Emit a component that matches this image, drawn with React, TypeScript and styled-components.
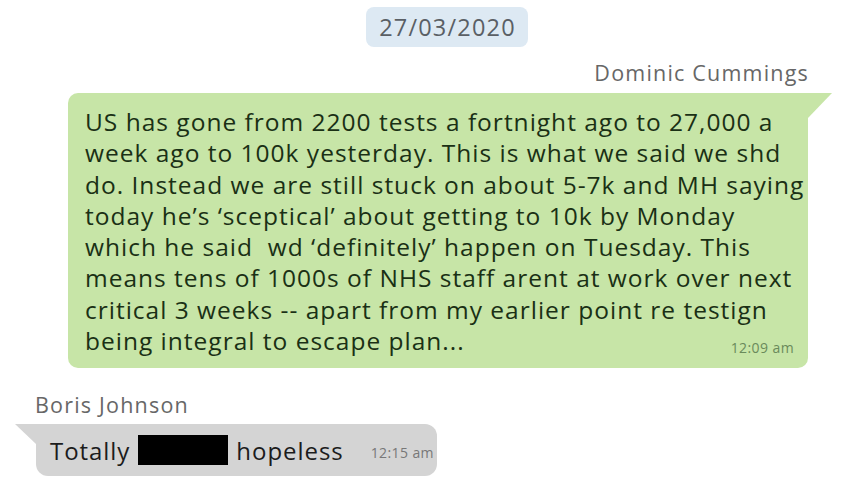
import React from "react";
import styled, { createGlobalStyle } from "styled-components";

const GlobalStyle = createGlobalStyle`
  html, body {
    margin: 0;
    padding: 0;
    background: #ffffff;
  }
  body {
    font-family: "Open Sans", "Noto Sans", sans-serif;
  }
`;

const outgoingLines = [
  "US has gone from 2200 tests a fortnight ago to 27,000 a",
  "week ago to 100k yesterday. This is what we said we shd",
  "do. Instead we are still stuck on about 5-7k and MH saying",
  "today he\u2019s \u2018sceptical\u2019 about getting to 10k by Monday",
  "which he said  wd \u2018definitely\u2019 happen on Tuesday. This",
  "means tens of 1000s of NHS staff arent at work over next",
  "critical 3 weeks -- apart from my earlier point re testign",
];

const App: React.FC = () => (
  <>
    <GlobalStyle />
    <Thread>
      <DateRow>
        <DatePill>27/03/2020</DatePill>
      </DateRow>

      <SenderName $align="right">Dominic Cummings</SenderName>
      <OutgoingBubble>
        {outgoingLines.map((line) => (
          <Line key={line}>{line}</Line>
        ))}
        <LastRow>
          <Line>being integral to escape plan...</Line>
          <Stamp $tone="green">12:09 am</Stamp>
        </LastRow>
      </OutgoingBubble>

      <SenderName $align="left">Boris Johnson</SenderName>
      <IncomingBubble>
        <InlineText>Totally</InlineText>
        <Redacted />
        <InlineText>hopeless</InlineText>
        <Stamp $tone="grey">12:15 am</Stamp>
      </IncomingBubble>
    </Thread>
  </>
);

const Thread = styled.div`
  display: flex;
  flex-direction: column;
  width: 850px;
  height: 478px;
  overflow: hidden;
  padding-top: 7px;
  box-sizing: border-box;
`;

const DateRow = styled.div`
  display: flex;
  justify-content: center;
  padding-left: 44px;
`;

const DatePill = styled.div`
  background: #dde9f3;
  color: #5a5f65;
  font-size: 23.5px;
  letter-spacing: 1.2px;
  line-height: 40px;
  height: 40px;
  padding: 0 12px 0 13px;
  border-radius: 8px;
`;

const SenderName = styled.div<{ $align: "left" | "right" }>`
  color: #676767;
  font-size: 21.5px;
  letter-spacing: 1.2px;
  line-height: 26px;
  text-align: ${(p) => p.$align};
  padding: ${(p) => (p.$align === "right" ? "13px 41px 0 0" : "24px 0 0 35px")};
`;

const OutgoingBubble = styled.div`
  position: relative;
  margin: 7px 42px 0 68px;
  padding: 13px 14px 12px 17px;
  background: #c7e5a7;
  border-radius: 10px 0 10px 10px;
  color: #1a3015;

  &::after {
    content: "";
    position: absolute;
    top: 0;
    right: -24px;
    border-top: 25px solid #c7e5a7;
    border-right: 24px solid transparent;
  }
`;

const Line = styled.div`
  font-size: 24.5px;
  letter-spacing: 1px;
  line-height: 31.3px;
  white-space: pre;
`;

const LastRow = styled.div`
  display: flex;
  justify-content: space-between;
  align-items: flex-end;
`;

const Stamp = styled.span<{ $tone: "green" | "grey" }>`
  flex-shrink: 0;
  white-space: nowrap;
  font-size: 14px;
  letter-spacing: 0.4px;
  line-height: 16px;
  color: ${(p) => (p.$tone === "green" ? "#6a8a5b" : "#787878")};
  margin-left: ${(p) => (p.$tone === "green" ? "0" : "19px")};
  padding-top: ${(p) => (p.$tone === "green" ? "0" : "6px")};
`;

const IncomingBubble = styled.div`
  position: relative;
  display: flex;
  align-items: center;
  gap: 8px;
  width: 401px;
  box-sizing: border-box;
  height: 52px;
  margin: 6px 0 0 36px;
  padding: 0 0 0 14px;
  background: #d4d4d4;
  border-radius: 0 12px 12px 12px;
  color: #1c1c1c;

  &::before {
    content: "";
    position: absolute;
    top: 0;
    left: -21px;
    border-top: 20px solid #d4d4d4;
    border-left: 21px solid transparent;
  }
`;

const InlineText = styled.span`
  flex-shrink: 0;
  white-space: nowrap;
  font-size: 24px;
  letter-spacing: 0.95px;
  line-height: 31px;
`;

const Redacted = styled.span`
  flex-shrink: 0;
  width: 90px;
  height: 30px;
  background: #000;
`;

export default App;
